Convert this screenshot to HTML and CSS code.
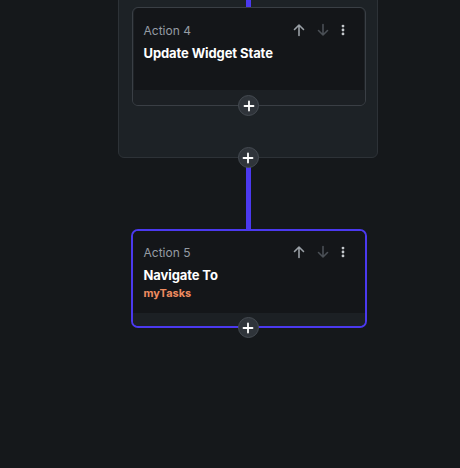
FILE: index.html
```html
<!DOCTYPE html>
<html>
<head>
<meta charset="utf-8">
<link rel="stylesheet" href="styles.css">
</head>
<body>
<div class="flow">
  <div class="group">
    <div class="line line-top"></div>
    <div class="wrap">
      <div class="card">
        <div class="card-head">
          <span class="label">Action 4</span>
          <div class="tools">
            <svg class="ico up" viewBox="0 0 16 16"><path d="M8 13.5V3M3.5 7.5L8 3l4.5 4.5" fill="none" stroke="currentColor" stroke-width="1.6" stroke-linecap="round" stroke-linejoin="round"/></svg>
            <svg class="ico down" viewBox="0 0 16 16"><path d="M8 2.5V13M3.5 8.5L8 13l4.5-4.5" fill="none" stroke="currentColor" stroke-width="1.6" stroke-linecap="round" stroke-linejoin="round"/></svg>
            <svg class="ico dots" viewBox="0 0 16 16"><circle cx="8" cy="3.5" r="1.6" fill="currentColor"/><circle cx="8" cy="8" r="1.6" fill="currentColor"/><circle cx="8" cy="12.5" r="1.6" fill="currentColor"/></svg>
          </div>
        </div>
        <div class="title">Update Widget State</div>
      </div>
      <div class="strip"></div>
    </div>
    <div class="plus plus-in"><svg viewBox="0 0 12 12"><path d="M6 1.5v9M1.5 6h9" stroke="#fff" stroke-width="1.8" stroke-linecap="round"/></svg></div>
  </div>
  <div class="plus"><svg viewBox="0 0 12 12"><path d="M6 1.5v9M1.5 6h9" stroke="#fff" stroke-width="1.8" stroke-linecap="round"/></svg></div>
  <div class="line line-mid"></div>
  <div class="wrap active">
    <div class="card">
      <div class="card-head">
        <span class="label">Action 5</span>
        <div class="tools">
          <svg class="ico up" viewBox="0 0 16 16"><path d="M8 13.5V3M3.5 7.5L8 3l4.5 4.5" fill="none" stroke="currentColor" stroke-width="1.6" stroke-linecap="round" stroke-linejoin="round"/></svg>
          <svg class="ico down" viewBox="0 0 16 16"><path d="M8 2.5V13M3.5 8.5L8 13l4.5-4.5" fill="none" stroke="currentColor" stroke-width="1.6" stroke-linecap="round" stroke-linejoin="round"/></svg>
          <svg class="ico dots" viewBox="0 0 16 16"><circle cx="8" cy="3.5" r="1.6" fill="currentColor"/><circle cx="8" cy="8" r="1.6" fill="currentColor"/><circle cx="8" cy="12.5" r="1.6" fill="currentColor"/></svg>
        </div>
      </div>
      <div class="title">Navigate To</div>
      <div class="sub">myTasks</div>
    </div>
    <div class="strip"></div>
  </div>
  <div class="plus"><svg viewBox="0 0 12 12"><path d="M6 1.5v9M1.5 6h9" stroke="#fff" stroke-width="1.8" stroke-linecap="round"/></svg></div>
</div>
</body>
</html>
```
FILE: styles.css
```css
* { box-sizing: border-box; }
html, body { margin: 0; padding: 0; }
body {
  background: #15181b;
  width: 460px;
  height: 468px;
  overflow: hidden;
  font-family: "Inter", "Noto Sans", sans-serif;
}
.flow {
  margin-left: 118px;
  width: 260px;
  display: flex;
  flex-direction: column;
  align-items: center;
}
.group {
  width: 260px;
  margin-top: -12px;
  height: 170px;
  background: #1d2226;
  border: 1px solid #2d3237;
  border-radius: 6px;
  display: flex;
  flex-direction: column;
  align-items: center;
}
.line {
  width: 5px;
  background: #4b39ef;
}
.line-top { height: 18px; }
.line-mid { height: 71px; }
.wrap {
  width: 234px;
  border: 1px solid #3a3f45;
  border-radius: 6px;
  background: #1e2226;
  display: flex;
  flex-direction: column;
  overflow: hidden;
}
.group .wrap { height: 99px; margin-left: 1px; }
.card {
  background: #141619;
  padding: 14px 14px 0 10px;
  margin: 0 1px;
  border-radius: 5px 5px 0 0;
  flex: 1;
}
.strip {
  height: 15px;
  background: #1c2024;
}
.wrap.active {
  width: 236px;
  height: 99px;
  margin-left: 1px;
  border: 2px solid #4b39ef;
  border-radius: 7px;
  background: #1b1e22;
}
.wrap.active .card { margin: 0; border-radius: 5px 5px 0 0; padding: 13px 15px 0 11px; }
.wrap.active .strip { height: 13px; }
.card-head {
  display: flex;
  align-items: center;
  justify-content: space-between;
  height: 16px;
}
.label {
  font-size: 12px;
  color: #959ca4;
  font-weight: 400;
}
.tools {
  display: flex;
  align-items: center;
}
.ico { width: 16px; height: 16px; display: block; }
.ico.up { color: #9aa0a6; margin-right: 8px; }
.ico.down { color: #4a4f55; margin-right: 5px; }
.ico.dots { color: #c4c8cc; width: 14px; }
.title {
  margin-top: 7px;
  font-size: 13px;
  font-weight: 700;
  color: #ffffff;
  letter-spacing: -0.1px;
}
.sub {
  margin-top: 3px;
  font-size: 11px;
  font-weight: 700;
  color: #ee8b60;
}
.plus {
  width: 21px;
  height: 21px;
  border-radius: 50%;
  background: #2f343a;
  border: 1px solid #454b52;
  display: flex;
  align-items: center;
  justify-content: center;
  margin-top: -11px;
  margin-bottom: -10px;
  position: relative;
  z-index: 2;
}
.plus svg { width: 12px; height: 12px; display: block; }
.plus-in { margin-left: 1px; }
```
